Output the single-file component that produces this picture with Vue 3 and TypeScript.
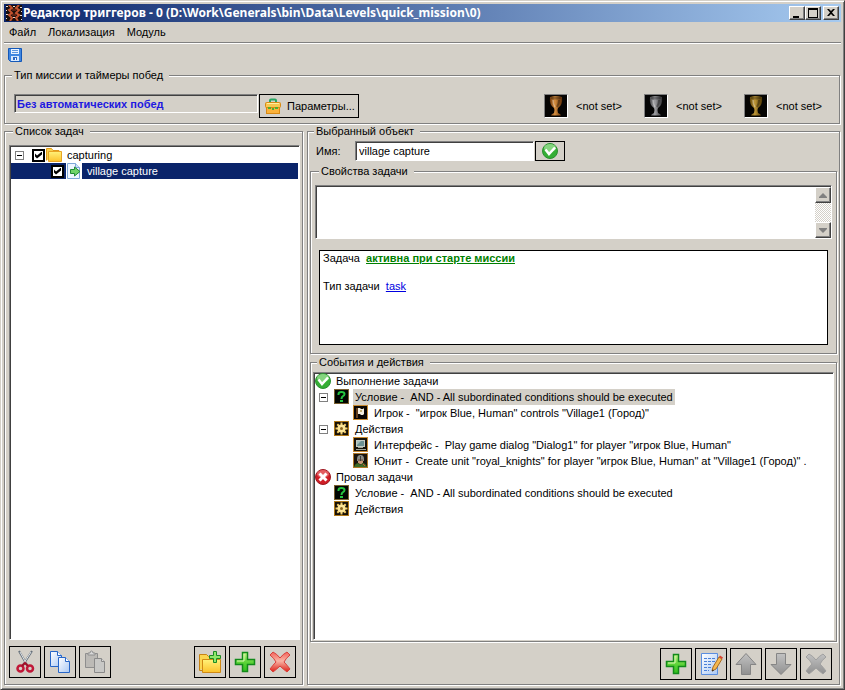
<script setup lang="ts">
import { ref } from 'vue'

interface TreeRow {
  id: number
  level: number
  icon: string
  text: string
  expandable?: boolean
  selected?: boolean
}

interface ToolButton {
  icon: string
  label: string
  disabled?: boolean
}

const menu: string[] = ['Файл', 'Локализация', 'Модуль']

const timers = [
  { icon: 'cup-bronze', text: '<not set>' },
  { icon: 'cup-silver', text: '<not set>' },
  { icon: 'cup-gold', text: '<not set>' },
]

const victory = ref('Без автоматических побед')
const objectName = ref('village capture')
const description = ref('')
const groupChecked = ref(true)
const taskChecked = ref(true)

const events: TreeRow[] = [
  { id: 1, level: 0, icon: 'ok', text: 'Выполнение задачи' },
  { id: 2, level: 1, icon: 'question', text: 'Условие -  AND - All subordinated conditions should be executed', expandable: true, selected: true },
  { id: 3, level: 2, icon: 'flag', text: 'Игрок -  "игрок Blue, Human" controls "Village1 (Город)"' },
  { id: 4, level: 1, icon: 'gear', text: 'Действия', expandable: true },
  { id: 5, level: 2, icon: 'screen', text: 'Интерфейс -  Play game dialog "Dialog1" for player "игрок Blue, Human"' },
  { id: 6, level: 2, icon: 'unit', text: 'Юнит -  Create unit "royal_knights" for player "игрок Blue, Human" at "Village1 (Город)" .' },
  { id: 7, level: 0, icon: 'fail', text: 'Провал задачи' },
  { id: 8, level: 1, icon: 'question', text: 'Условие -  AND - All subordinated conditions should be executed' },
  { id: 9, level: 1, icon: 'gear', text: 'Действия' },
]

const clipboardTools: ToolButton[] = [
  { icon: 'cut', label: 'Вырезать' },
  { icon: 'copy', label: 'Копировать' },
  { icon: 'paste', label: 'Вставить', disabled: true },
]
const taskTools: ToolButton[] = [
  { icon: 'folder-add', label: 'Добавить группу' },
  { icon: 'plus', label: 'Добавить задачу' },
  { icon: 'cross', label: 'Удалить' },
]
const eventTools: ToolButton[] = [
  { icon: 'plus', label: 'Добавить' },
  { icon: 'edit', label: 'Изменить' },
  { icon: 'up', label: 'Вверх', disabled: true },
  { icon: 'down', label: 'Вниз', disabled: true },
  { icon: 'cross-off', label: 'Удалить', disabled: true },
]
</script>

<template>
  <div class="window">
    <svg class="defs" aria-hidden="true">
      <defs>
        <linearGradient id="g-green" x1="0" y1="0" x2="0" y2="1"><stop offset="0" stop-color="#c8f58a" /><stop offset="0.5" stop-color="#5fd43a" /><stop offset="1" stop-color="#2fbf1c" /></linearGradient>
        <linearGradient id="g-red" x1="0" y1="0" x2="0" y2="1"><stop offset="0" stop-color="#f2625a" /><stop offset="0.45" stop-color="#f9b5a4" /><stop offset="1" stop-color="#dd2016" /></linearGradient>
        <linearGradient id="g-grey" x1="0" y1="0" x2="0" y2="1"><stop offset="0" stop-color="#c2c2c2" /><stop offset="1" stop-color="#909090" /></linearGradient>
        <linearGradient id="g-yellow" x1="0" y1="0" x2="0" y2="1"><stop offset="0" stop-color="#fff27a" /><stop offset="1" stop-color="#fcc22c" /></linearGradient>
        <linearGradient id="g-blue" x1="0" y1="0" x2="1" y2="1"><stop offset="0" stop-color="#ffffff" /><stop offset="1" stop-color="#a9c8f4" /></linearGradient>
        <linearGradient id="g-bronze" x1="0" y1="0" x2="1" y2="0"><stop offset="0" stop-color="#6b3508" /><stop offset="0.4" stop-color="#d89040" /><stop offset="1" stop-color="#5c2c06" /></linearGradient>
        <linearGradient id="g-silver" x1="0" y1="0" x2="1" y2="0"><stop offset="0" stop-color="#4a4a4c" /><stop offset="0.4" stop-color="#a0a0a4" /><stop offset="1" stop-color="#333335" /></linearGradient>
        <linearGradient id="g-gold" x1="0" y1="0" x2="1" y2="0"><stop offset="0" stop-color="#5e4408" /><stop offset="0.4" stop-color="#c09838" /><stop offset="1" stop-color="#4c3604" /></linearGradient>
      </defs>
      <symbol id="logo" viewBox="0 0 16 16">
        <rect width="16" height="16" fill="#1a0f0c" />
        <path d="M0 1h2v1H0zM0 5h1v1H0zM0 9h2v1H0zM0 13h1v1H0zM14 2h2v1h-2zM15 6h1v1h-1zM14 10h2v1h-2zM15 14h1v1h-1zM7 1h2v1H7zM7 12h2v1H7z" fill="#e8ded8" />
        <path d="M3 0 L6 3 L3 5 L6 8 L3 10 L6 13 L4 16" fill="none" stroke="#c4532f" stroke-width="2" />
        <path d="M13 0 L10 3 L13 5 L10 8 L13 10 L10 13 L12 16" fill="none" stroke="#c4532f" stroke-width="2" />
        <path d="M6 5h4M6 10h4" stroke="#9a3a20" />
      </symbol>
      <symbol id="save" viewBox="0 0 14 14">
        <path d="M0.5 0.5h13v13h-11l-2-2z" fill="#3f86e0" stroke="#1458b8" />
        <rect x="3" y="1" width="8" height="5" fill="#e8f2ff" />
        <path d="M4 2.5h6M4 4.5h6" stroke="#5a94de" />
        <rect x="3" y="8" width="8" height="5" fill="#d8e8fc" />
        <rect x="5" y="9" width="4" height="3" fill="#2a68c4" />
        <rect x="7" y="10" width="1" height="2" fill="#fff" />
      </symbol>
      <symbol id="case" viewBox="0 0 16 16">
        <path d="M5 4.5V2.500q0-1 1-1h4q1 0 1 1v2" fill="none" stroke="#27a862" stroke-width="2" />
        <rect x="0.500" y="4.500" width="15" height="5" rx="1" fill="#f8c850" stroke="#d88a14" />
        <rect x="1.500" y="9.500" width="13" height="6" fill="#fbb23a" stroke="#d88a14" />
        <path d="M2 5.500h12" stroke="#fff0a0" />
        <path d="M3 9h3v2H3zM10 9h3v2h-3zM7 10h2v2H7z" fill="#4fae30" />
      </symbol>
      <symbol id="cup-shape" viewBox="0 0 22 22">
        <path d="M5 2 Q11 0 17 2 Q18 10 13 13 L12.500 15 L13 18 Q16 19 16 20.500 H6 Q6 19 9 18 L9.500 15 L9 13 Q4 10 5 2Z" />
        <ellipse cx="11" cy="3" rx="5" ry="1.500" fill="#000" fill-opacity="0.3" />
        <path d="M8 5 Q8 9 10 12" fill="none" stroke="#fff" stroke-opacity="0.35" stroke-width="1.500" />
        <path d="M14 5 Q14 9 12 12" fill="none" stroke="#000" stroke-opacity="0.35" stroke-width="2" />
      </symbol>
      <symbol id="cup-bronze" viewBox="0 0 22 22"><rect width="22" height="22" fill="#060403" /><use href="#cup-shape" fill="url(#g-bronze)" /></symbol>
      <symbol id="cup-silver" viewBox="0 0 22 22"><rect width="22" height="22" fill="#060606" /><use href="#cup-shape" fill="url(#g-silver)" /></symbol>
      <symbol id="cup-gold" viewBox="0 0 22 22"><rect width="22" height="22" fill="#060503" /><use href="#cup-shape" fill="url(#g-gold)" /></symbol>
      <symbol id="folder" viewBox="0 0 16 16">
        <path d="M0.500 13.500V1.500h5l1.500 2h6v2" fill="#fbd24c" stroke="#e09a1c" />
        <path d="M2.500 4.500h13v10H2.500z" fill="url(#g-yellow)" stroke="#e8a424" />
      </symbol>
      <symbol id="task" viewBox="0 0 16 16">
        <path d="M1.500 0.500h8l4 4v11h-12z" fill="#eef6ff" stroke="#7fa8d8" />
        <path d="M9.500 0.500v4h4" fill="#cfe2f8" stroke="#7fa8d8" />
        <path d="M4.500 6.500h4V4l5.500 4.500L8.500 13v-2.500h-4z" fill="#6fd468" stroke="#1f8a34" />
      </symbol>
      <symbol id="ok" viewBox="0 0 16 16">
        <circle cx="8" cy="8" r="7.500" fill="#35ae35" stroke="#2b9031" />
        <ellipse cx="8" cy="5" rx="6" ry="4" fill="#a8e6a0" fill-opacity="0.7" />
        <path d="M3.500 6.500L7 11l6-6.500" fill="none" stroke="#fff" stroke-width="2.500" />
      </symbol>
      <symbol id="fail" viewBox="0 0 16 16">
        <circle cx="8" cy="8" r="7.500" fill="#d01e26" stroke="#9c1820" />
        <ellipse cx="8" cy="5" rx="6" ry="4" fill="#f08888" fill-opacity="0.6" />
        <path d="M4.500 4.500l7 7M11.500 4.500l-7 7" stroke="#fff" stroke-width="3" />
      </symbol>
      <symbol id="question" viewBox="0 0 16 16">
        <rect x="0.500" y="0.500" width="14" height="14" fill="#020602" stroke="#7a6030" />
        <path d="M4.500 6V5q0-2 3-2t3 2q0 1.500-1.500 2.200Q7.500 8 7.500 10" fill="none" stroke="#25c440" stroke-width="2" />
        <rect x="6" y="11" width="3" height="2" fill="#25c440" />
      </symbol>
      <symbol id="gear" viewBox="0 0 16 16">
        <rect x="0.500" y="0.500" width="14" height="14" fill="#171006" stroke="#b07818" />
        <path d="M7.500 1.500v12M1.500 7.500h12M3.300 3.300l8.400 8.400M11.700 3.300l-8.400 8.400" stroke="#f5ce68" stroke-width="2" />
        <circle cx="7.500" cy="7.500" r="4" fill="#fbe498" />
        <circle cx="7.500" cy="7.500" r="1.500" fill="#8a6420" />
      </symbol>
      <symbol id="flag" viewBox="0 0 16 16">
        <rect x="0.500" y="0.500" width="14" height="14" fill="#0a0604" stroke="#c88a30" />
        <path d="M4 3v10" stroke="#c07838" stroke-width="1" />
        <path d="M5 3h2l1 1h2l1-1v6l-1 1H8L7 9H5z" fill="#f4eee0" />
        <path d="M7 5h2v2H7z" fill="#c8b070" />
      </symbol>
      <symbol id="screen" viewBox="0 0 16 16">
        <rect x="0.500" y="0.500" width="14" height="14" fill="#17120a" stroke="#c88a30" />
        <path d="M3 3h9v7H3z" fill="#c4ccc4" />
        <path d="M4 4h7v5H4z" fill="#6e9292" />
        <path d="M4 4h4l-4 4z" fill="#a6c0bc" />
        <path d="M5 10h5v1H5zM3 12h10v1H3z" fill="#a4a898" />
      </symbol>
      <symbol id="unit" viewBox="0 0 16 16">
        <rect x="0.500" y="0.500" width="14" height="14" fill="#1a140c" stroke="#b07828" />
        <path d="M4 6q0-4 3.500-4T11 6v2H4z" fill="#8a8c86" />
        <path d="M5 6h5v4l-2 1.500L5 10z" fill="#c89878" />
        <path d="M5 7h5M7.500 3v5" stroke="#3c3c38" />
        <path d="M1 14q1-3.500 4-4L7.500 12 10 10q3 .5 4 4z" fill="#3c6a24" />
        <path d="M10 11l2 2" stroke="#d0483a" />
      </symbol>
      <symbol id="cut" viewBox="0 0 24 24">
        <path d="M6 1L14 15M19 1L10 15" stroke="#66707a" stroke-width="2" />
        <path d="M7 2L13 13M18 2L11 13" stroke="#dfe4e8" stroke-width="1" />
        <ellipse cx="7.500" cy="18.500" rx="3" ry="3" fill="none" stroke="#c01838" stroke-width="2.500" />
        <ellipse cx="17" cy="18.500" rx="3" ry="3" fill="none" stroke="#c01838" stroke-width="2.500" />
        <path d="M9 16l3-3 3 3" stroke="#a01028" stroke-width="2" fill="none" />
      </symbol>
      <symbol id="copy" viewBox="0 0 24 24">
        <path d="M2.500 1.500h7l4 4v11h-11z" fill="url(#g-blue)" stroke="#2766c8" />
        <path d="M9.500 1.500v4h4" fill="#fff" stroke="#2766c8" />
        <path d="M10.500 7.500h7l4 4v11h-11z" fill="url(#g-blue)" stroke="#2766c8" />
        <path d="M17.500 7.500v4h4" fill="#fff" stroke="#2766c8" />
      </symbol>
      <symbol id="paste" viewBox="0 0 24 24">
        <path d="M2.500 3.500h12v14h-12z" fill="#bcbab6" stroke="#8e8e8e" />
        <path d="M5 5V3h2q0-2 1.500-2T10 3h2v2z" fill="#d8d8d8" stroke="#8e8e8e" />
        <path d="M11.500 8.500h7l3 3v11h-10z" fill="#c8c8c6" stroke="#8a8a8a" />
        <path d="M18.500 8.500v3h3" fill="#dcdcdc" stroke="#8a8a8a" />
      </symbol>
      <symbol id="folder-add" viewBox="0 0 24 24">
        <path d="M1.500 20.500V4.500h7l2 2h7v4" fill="#fbd650" stroke="#c88414" />
        <path d="M1.500 20.500h3" stroke="#c88414" />
        <path d="M4.500 9.500h18v13h-18z" fill="url(#g-yellow)" stroke="#d08a14" />
        <path d="M15.500 1.500h3v4h4v3h-4v4h-3v-4h-4v-3h4z" fill="#8fe86a" stroke="#1d8a24" />
      </symbol>
      <symbol id="plus" viewBox="0 0 24 24">
        <path d="M9.500 2.500h5v7h7v5h-7v7h-5v-7h-7v-5h7z" fill="url(#g-green)" stroke="#128a1a" stroke-width="1.500" />
        <path d="M11 4v7H4" fill="none" stroke="#d9f8b0" />
      </symbol>
      <symbol id="cross-shape" viewBox="0 0 24 24">
        <path d="M2 5L5 2Q9 4 12 8Q15 4 19 2L22 5Q18 8 16 12Q19 15 22 19L19 22Q15 19 12 16Q9 19 5 22L2 19Q5 15 8 12Q6 8 2 5Z" />
      </symbol>
      <symbol id="cross" viewBox="0 0 24 24"><use href="#cross-shape" fill="url(#g-red)" stroke="#d8403a" /></symbol>
      <symbol id="cross-off" viewBox="0 0 24 24"><use href="#cross-shape" fill="url(#g-grey)" stroke="#a0a0a0" /></symbol>
      <symbol id="edit" viewBox="0 0 24 24">
        <path d="M2.500 1.500h16v21h-16z" fill="url(#g-blue)" stroke="#5a8ee0" />
        <path d="M5 6.500h11M5 9.500h11M5 12.500h8M5 15.500h8M5 18.500h5" stroke="#4a80d8" stroke-dasharray="3 1" />
        <path d="M13 19l1-4L20 5l3 2-6 10z" fill="#f4b850" stroke="#a86a20" />
        <path d="M20 5l1-1.500 3 2L23 7z" fill="#d84030" />
        <path d="M13 19.500l.5-2 1.500 1z" fill="#222" />
      </symbol>
      <symbol id="up" viewBox="0 0 24 24"><path d="M12 1.500L22 12.500H16.500V22.500H7.500V12.500H2z" fill="url(#g-grey)" stroke="#858585" /></symbol>
      <symbol id="down" viewBox="0 0 24 24"><path d="M12 22.500L22 12.500H16.500V1.500H7.500V12.500H2z" fill="url(#g-grey)" stroke="#858585" /></symbol>
    </svg>

    <header class="title-bar">
      <svg class="icon16"><use href="#logo" /></svg>
      <h1>Редактор триггеров - 0 (D:\Work\Generals\bin\Data\Levels\quick_mission\0)</h1>
      <div class="window-buttons">
        <button type="button" aria-label="Свернуть"><svg viewBox="0 0 12 10"><path d="M2 8h6v2H2z" /></svg></button>
        <button type="button" aria-label="Развернуть"><svg viewBox="0 0 12 10"><path d="M1 0h10v10H1zM2 2v7h8V2z" fill-rule="evenodd" /></svg></button>
        <button type="button" class="close" aria-label="Закрыть"><svg viewBox="0 0 12 10"><path d="M2 1h2l2 2 2-2h2L7 4.500 10 8H8L6 6 4 8H2l3-3.500z" /></svg></button>
      </div>
    </header>

    <nav class="menu">
      <button v-for="item in menu" :key="item" type="button">{{ item }}</button>
    </nav>

    <div class="toolbar">
      <button type="button" aria-label="Сохранить"><svg><use href="#save" /></svg></button>
    </div>

    <fieldset class="mission">
      <legend>Тип миссии и таймеры побед</legend>
      <div class="mission-row">
        <input v-model="victory" class="victory" readonly aria-label="Тип победы" />
        <button type="button" class="params"><svg><use href="#case" /></svg>Параметры...</button>
        <div class="timers">
          <div v-for="timer in timers" :key="timer.icon" class="timer">
            <svg><use :href="'#' + timer.icon" /></svg>
            <span>{{ timer.text }}</span>
          </div>
        </div>
      </div>
    </fieldset>

    <main class="panes">
      <fieldset class="tasks">
        <legend>Список задач</legend>
        <ul class="tree">
          <li class="row">
            <button type="button" class="expander" aria-label="Свернуть группу"></button>
            <input id="check-group" v-model="groupChecked" type="checkbox" />
            <svg class="icon16"><use href="#folder" /></svg>
            <label for="check-group">capturing</label>
          </li>
          <li class="row child active">
            <input id="check-task" v-model="taskChecked" type="checkbox" />
            <svg class="icon16 doc"><use href="#task" /></svg>
            <label for="check-task">village capture</label>
          </li>
        </ul>
        <div class="tools">
          <div class="tool-group">
            <button v-for="tool in clipboardTools" :key="tool.icon" type="button" :aria-label="tool.label" :disabled="tool.disabled">
              <svg><use :href="'#' + tool.icon" /></svg>
            </button>
          </div>
          <div class="tool-group">
            <button v-for="tool in taskTools" :key="tool.icon" type="button" :aria-label="tool.label" :disabled="tool.disabled">
              <svg><use :href="'#' + tool.icon" /></svg>
            </button>
          </div>
        </div>
      </fieldset>

      <fieldset class="object">
        <legend>Выбранный объект</legend>
        <div class="name-row">
          <label for="object-name">Имя:</label>
          <input id="object-name" v-model="objectName" type="text" />
          <button type="button" aria-label="Применить"><svg class="icon16"><use href="#ok" /></svg></button>
        </div>

        <fieldset class="props">
          <legend>Свойства задачи</legend>
          <div class="memo">
            <textarea v-model="description" aria-label="Описание задачи"></textarea>
            <div class="scroll">
              <button type="button" aria-label="Прокрутить вверх"><svg viewBox="0 0 8 5"><path d="M4 0L8 4v1H0V4z" /></svg></button>
              <button type="button" aria-label="Прокрутить вниз"><svg viewBox="0 0 8 5"><path d="M4 5L8 1V0H0v1z" /></svg></button>
            </div>
          </div>
          <div class="summary">
            <p>Задача&nbsp; <a href="#start" class="start">активна при старте миссии</a></p>
            <p>Тип задачи&nbsp; <a href="#type">task</a></p>
          </div>
        </fieldset>

        <fieldset class="events">
          <legend>События и действия</legend>
          <ul class="tree">
            <li v-for="row in events" :key="row.id" class="row" :class="'level' + row.level">
              <span v-if="row.level > 0" class="branch">
                <button v-if="row.expandable" type="button" class="expander" aria-label="Свернуть ветку"></button>
              </span>
              <svg class="icon16"><use :href="'#' + row.icon" /></svg>
              <span class="caption" :class="{ selected: row.selected }">{{ row.text }}</span>
            </li>
          </ul>
        </fieldset>

        <div class="tools end">
          <div class="tool-group">
            <button v-for="tool in eventTools" :key="tool.icon" type="button" :aria-label="tool.label" :disabled="tool.disabled">
              <svg><use :href="'#' + tool.icon" /></svg>
            </button>
          </div>
        </div>
      </fieldset>
    </main>
  </div>
</template>

<style>
body {
  background: #d4d0c8;
}
</style>

<style scoped>
.window {
  box-sizing: border-box;
  display: flex;
  flex-direction: column;
  min-height: 100vh;
  padding: 3px 3px 4px;
  border: 1px solid #d4d0c8;
  border-right-color: #404040;
  border-bottom-color: #404040;
  box-shadow: inset 1px 1px 0 #fff, inset -1px -1px 0 #808080;
  background: #d4d0c8;
  color: #000;
  font: 11px/14px "Liberation Sans", Arial, sans-serif;
}
.window * {
  box-sizing: border-box;
}
.defs {
  position: absolute;
  width: 0;
  height: 0;
}
button,
input,
textarea {
  margin: 0;
  padding: 0;
  border: 0;
  border-radius: 0;
  background: none;
  color: inherit;
  font: inherit;
  outline: none;
}
svg {
  display: block;
  flex: none;
}
.icon16 {
  width: 16px;
  height: 16px;
}

.title-bar {
  display: flex;
  align-items: center;
  height: 18px;
  padding: 0 2px;
  background: linear-gradient(90deg, #0a246a, #a6caf0);
}
.title-bar h1 {
  flex: 1;
  min-width: 0;
  margin: 0;
  padding-left: 1px;
  overflow: hidden;
  color: #fff;
  font: bold 12px/18px "Noto Sans", sans-serif;
  white-space: nowrap;
}
.window-buttons {
  display: flex;
}
.window-buttons button {
  display: grid;
  place-items: center;
  width: 16px;
  height: 14px;
}
.window-buttons svg {
  width: 12px;
  height: 10px;
}
.window-buttons .close {
  margin-left: 2px;
}
.window-buttons button,
.scroll button {
  border: 1px solid;
  border-color: #fff #404040 #404040 #fff;
  box-shadow: inset -1px -1px 0 #808080;
  background: #d4d0c8;
}

.menu {
  display: flex;
  gap: 12px;
  height: 21px;
  padding: 0 5px;
  border-bottom: 1px solid #808080;
  box-shadow: 0 1px 0 #fff;
}
.toolbar {
  height: 25px;
  padding: 5px 4px;
}
.toolbar svg {
  width: 14px;
  height: 14px;
}

fieldset {
  display: flex;
  flex-direction: column;
  min-width: 0;
  margin: 0;
  padding: 0;
  border: 1px solid #808080;
  box-shadow: 1px 1px 0 #fff, inset 1px 1px 0 #fff;
}
legend {
  height: 14px;
  margin-left: 4px;
  padding: 0 6px 0 2px;
  background: linear-gradient(#d4d0c8, #d4d0c8) 0 100% / 100% 10px no-repeat;
}

.mission {
  margin-right: 1px;
  padding: 12px 15px 5px 0;
}
.mission legend {
  margin-left: 7px;
}
.mission-row {
  display: flex;
  align-items: flex-start;
  padding: 0 4px 0 9px;
}
.victory {
  width: 244px;
  height: 19px;
  padding: 0 2px;
  color: #2018e0;
  font-weight: bold;
}
.victory,
#object-name,
.memo,
.tree {
  border: 1px solid;
  border-color: #808080 #fff #fff #808080;
  box-shadow: inset 1px 1px 0 #404040;
}
.params {
  display: flex;
  align-items: center;
  gap: 6px;
  width: 100px;
  height: 24px;
  margin-left: 1px;
  padding: 0 5px;
  border: 1px solid #000;
}
.params svg {
  width: 16px;
  height: 16px;
}
.timers {
  display: flex;
  gap: 24px;
  margin-left: auto;
}
.timer {
  display: flex;
  align-items: center;
  gap: 8px;
  width: 76px;
  white-space: nowrap;
}
.timer svg {
  width: 24px;
  height: 24px;
  border: 1px solid;
  border-color: #808080 #fff #fff #808080;
}

.panes {
  display: grid;
  flex: 1;
  grid-template-columns: minmax(0, 299fr) minmax(0, 533fr);
  gap: 4px;
  margin-right: 1px;
}
.tasks {
  padding: 7px 2px 6px 4px;
}
.object {
  padding: 3px 2px 4px;
}
.tree {
  flex: 1;
  margin: 0;
  padding: 1px;
  background: #fff;
  list-style: none;
  white-space: pre;
  overflow: hidden;
}
.row {
  display: flex;
  align-items: center;
  height: 16px;
  line-height: 16px;
}
.expander {
  flex: none;
  width: 9px;
  height: 9px;
  border: 1px solid #808080;
  background: linear-gradient(#000, #000) center / 5px 1px no-repeat #fff;
}
.tasks .row {
  padding-left: 4px;
}
.tasks .row.child {
  padding-left: 40px;
}
.tasks .expander {
  margin-right: 8px;
}
.tasks .icon16 {
  margin-left: 1px;
}
.tasks .doc {
  margin-left: 2px;
}
.tasks label {
  padding-left: 5px;
}
.active {
  background: #0a246a;
  color: #fff;
}
input[type="checkbox"] {
  display: grid;
  flex: none;
  place-items: center;
  width: 13px;
  height: 13px;
  border: 2px solid #000;
  background: #fff;
  appearance: none;
}
input[type="checkbox"]:checked::before {
  width: 7px;
  height: 7px;
  background: #000;
  clip-path: polygon(0 2px, 2px 4px, 7px 0, 7px 3px, 2px 7px, 0 5px);
  content: "";
}
.doc {
  background: #fff;
}

.tools {
  display: flex;
  justify-content: space-between;
  padding: 6px 4px 0 0;
}
.tools.end {
  justify-content: flex-end;
  padding-right: 5px;
}
.tool-group {
  display: flex;
  gap: 3px;
}
.tool-group button {
  display: grid;
  place-items: center;
  width: 32px;
  height: 32px;
  border: 1px solid #000;
}
.tool-group svg {
  width: 24px;
  height: 24px;
}

.name-row {
  display: flex;
  align-items: center;
  gap: 1px;
  height: 20px;
  margin-bottom: 3px;
  padding-left: 6px;
}
.name-row label {
  width: 38px;
}
#object-name {
  width: 179px;
  height: 20px;
  padding: 0 3px;
  background: #fff;
}
.name-row button {
  display: grid;
  place-items: center;
  width: 30px;
  height: 20px;
  border: 1px solid #000;
}
.props {
  padding: 7px 4px 8px;
}
.memo {
  display: flex;
  height: 54px;
  background: #fff;
}
.memo textarea {
  flex: 1;
  min-width: 0;
  margin: 1px;
  resize: none;
}
.scroll {
  display: flex;
  flex-direction: column;
  justify-content: space-between;
  width: 16px;
  margin-top: 1px;
  background: repeating-conic-gradient(#fff 0 25%, #d4d0c8 0 50%) 0 0 / 2px 2px;
}
.scroll button {
  display: grid;
  place-items: center;
  height: 16px;
}
.scroll svg {
  width: 8px;
  height: 5px;
  fill: #808080;
}
.summary {
  height: 95px;
  margin: 11px 4px 0;
  padding: 0 3px;
  border: 1px solid #000;
  background: #fff;
}
.summary p {
  margin: 0 0 14px;
}
.summary a {
  color: #0000e0;
}
.summary .start {
  color: #008000;
  font-weight: bold;
}
.events {
  flex: 1;
  margin-top: 1px;
  padding: 3px 2px 1px;
}
.events .tree {
  padding: 0 1px;
}
.branch {
  display: flex;
  flex: none;
  align-items: center;
  width: 19px;
  padding-left: 4px;
}
.level2 .branch {
  width: 38px;
}
.caption {
  margin-left: 3px;
  padding: 0 2px;
}
.caption.selected {
  background: #d4d0c8;
}
</style>
